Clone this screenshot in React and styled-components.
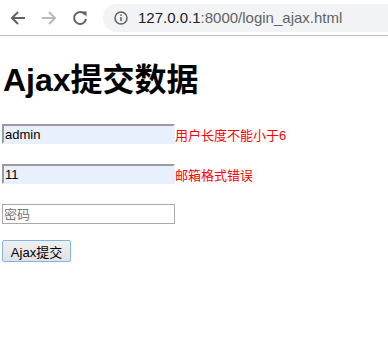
import styled, { createGlobalStyle } from "styled-components";

const Global = createGlobalStyle`
  body {
    margin: 0;
    background: #fff;
    font-family: "Liberation Sans", "Noto Sans CJK SC", sans-serif;
  }
`;

const Toolbar = styled.div`
  height: 35px;
  border-bottom: 1px solid #bdbdbd;
  display: flex;
  align-items: center;
  padding-left: 8px;
  background: #fff;
`;
const NavButton = styled.div`
  width: 20px;
  height: 20px;
  margin-right: 11px;
  display: flex;
  align-items: center;
  justify-content: center;
  color: ${(p) => (p.disabled ? "#b8babd" : "#5f6368")};
`;
const Omnibox = styled.div`
  flex: 1;
  height: 28px;
  margin-left: 2px;
  border-radius: 14px 0 0 14px;
  background: #f1f3f4;
  display: flex;
  align-items: center;
  padding-left: 11px;
  font-size: 15px;
  color: #5f6368;
`;
const Host = styled.span`
  color: #202124;
  margin-left: 10px;
`;

const Page = styled.div`
  padding: 0 2px;
`;
const Title = styled.h1`
  font-size: 32px;
  font-weight: bold;
  margin: 26px 0 25px 1px;
  line-height: 37px;
`;
const Row = styled.div`
  display: flex;
  align-items: center;
  height: 20px;
  margin-bottom: ${(p) => p.gap || 20}px;
`;
const Field = styled.input`
  box-sizing: border-box;
  width: 173px;
  height: 20px;
  padding: 0 1px;
  font-size: 13px;
  font-family: inherit;
  color: #000;
  outline: none;
  background: ${(p) => (p.filled ? "#e8f0fe" : "#fff")};
  border: ${(p) => (p.filled ? "2px solid #e8f0fe" : "1px solid #a9a9a9")};
  border-top-color: ${(p) => (p.filled ? "#9a9a9a" : "#a9a9a9")};
  border-left-color: ${(p) => (p.filled ? "#9a9a9a" : "#a9a9a9")};
  &::placeholder {
    color: #757575;
  }
`;
const Error = styled.span`
  color: #ff0000;
  font-size: 13px;
`;
const Button = styled.button`
  box-sizing: border-box;
  height: 22px;
  width: 69px;
  padding: 0;
  font-size: 13px;
  font-family: inherit;
  color: #000;
  background: linear-gradient(#f0f0f0, #e1e1e1);
  border: 1px solid #7eb4ea;
  border-radius: 2px;
`;

export default function App() {
  return (
    <>
      <Global />
      <Toolbar>
        <NavButton>
          <svg width="16" height="16" viewBox="0 0 16 16">
            <path d="M15 8H2M8 2L2 8l6 6" fill="none" stroke="currentColor" strokeWidth="2" />
          </svg>
        </NavButton>
        <NavButton disabled>
          <svg width="16" height="16" viewBox="0 0 16 16">
            <path d="M1 8h13M8 2l6 6-6 6" fill="none" stroke="currentColor" strokeWidth="2" />
          </svg>
        </NavButton>
        <NavButton>
          <svg width="16" height="16" viewBox="0 0 16 16">
            <path d="M13 4.5A6 6 0 1 0 14 9" fill="none" stroke="currentColor" strokeWidth="2" />
            <path d="M9.5 1.5h5v5z" fill="currentColor" />
          </svg>
        </NavButton>
        <Omnibox>
          <svg width="14" height="14" viewBox="0 0 14 14">
            <circle cx="7" cy="7" r="6" fill="none" stroke="#5f6368" strokeWidth="1.5" />
            <rect x="6.25" y="6" width="1.5" height="4.2" fill="#5f6368" />
            <rect x="6.25" y="3.4" width="1.5" height="1.5" fill="#5f6368" />
          </svg>
          <Host>127.0.0.1</Host>:8000/login_ajax.html
        </Omnibox>
      </Toolbar>
      <Page>
        <Title>Ajax提交数据</Title>
        <Row>
          <Field filled defaultValue="admin" />
          <Error>用户长度不能小于6</Error>
        </Row>
        <Row>
          <Field filled defaultValue="11" />
          <Error>邮箱格式错误</Error>
        </Row>
        <Row gap={16}>
          <Field placeholder="密码" />
        </Row>
        <Button>Ajax提交</Button>
      </Page>
    </>
  );
}
